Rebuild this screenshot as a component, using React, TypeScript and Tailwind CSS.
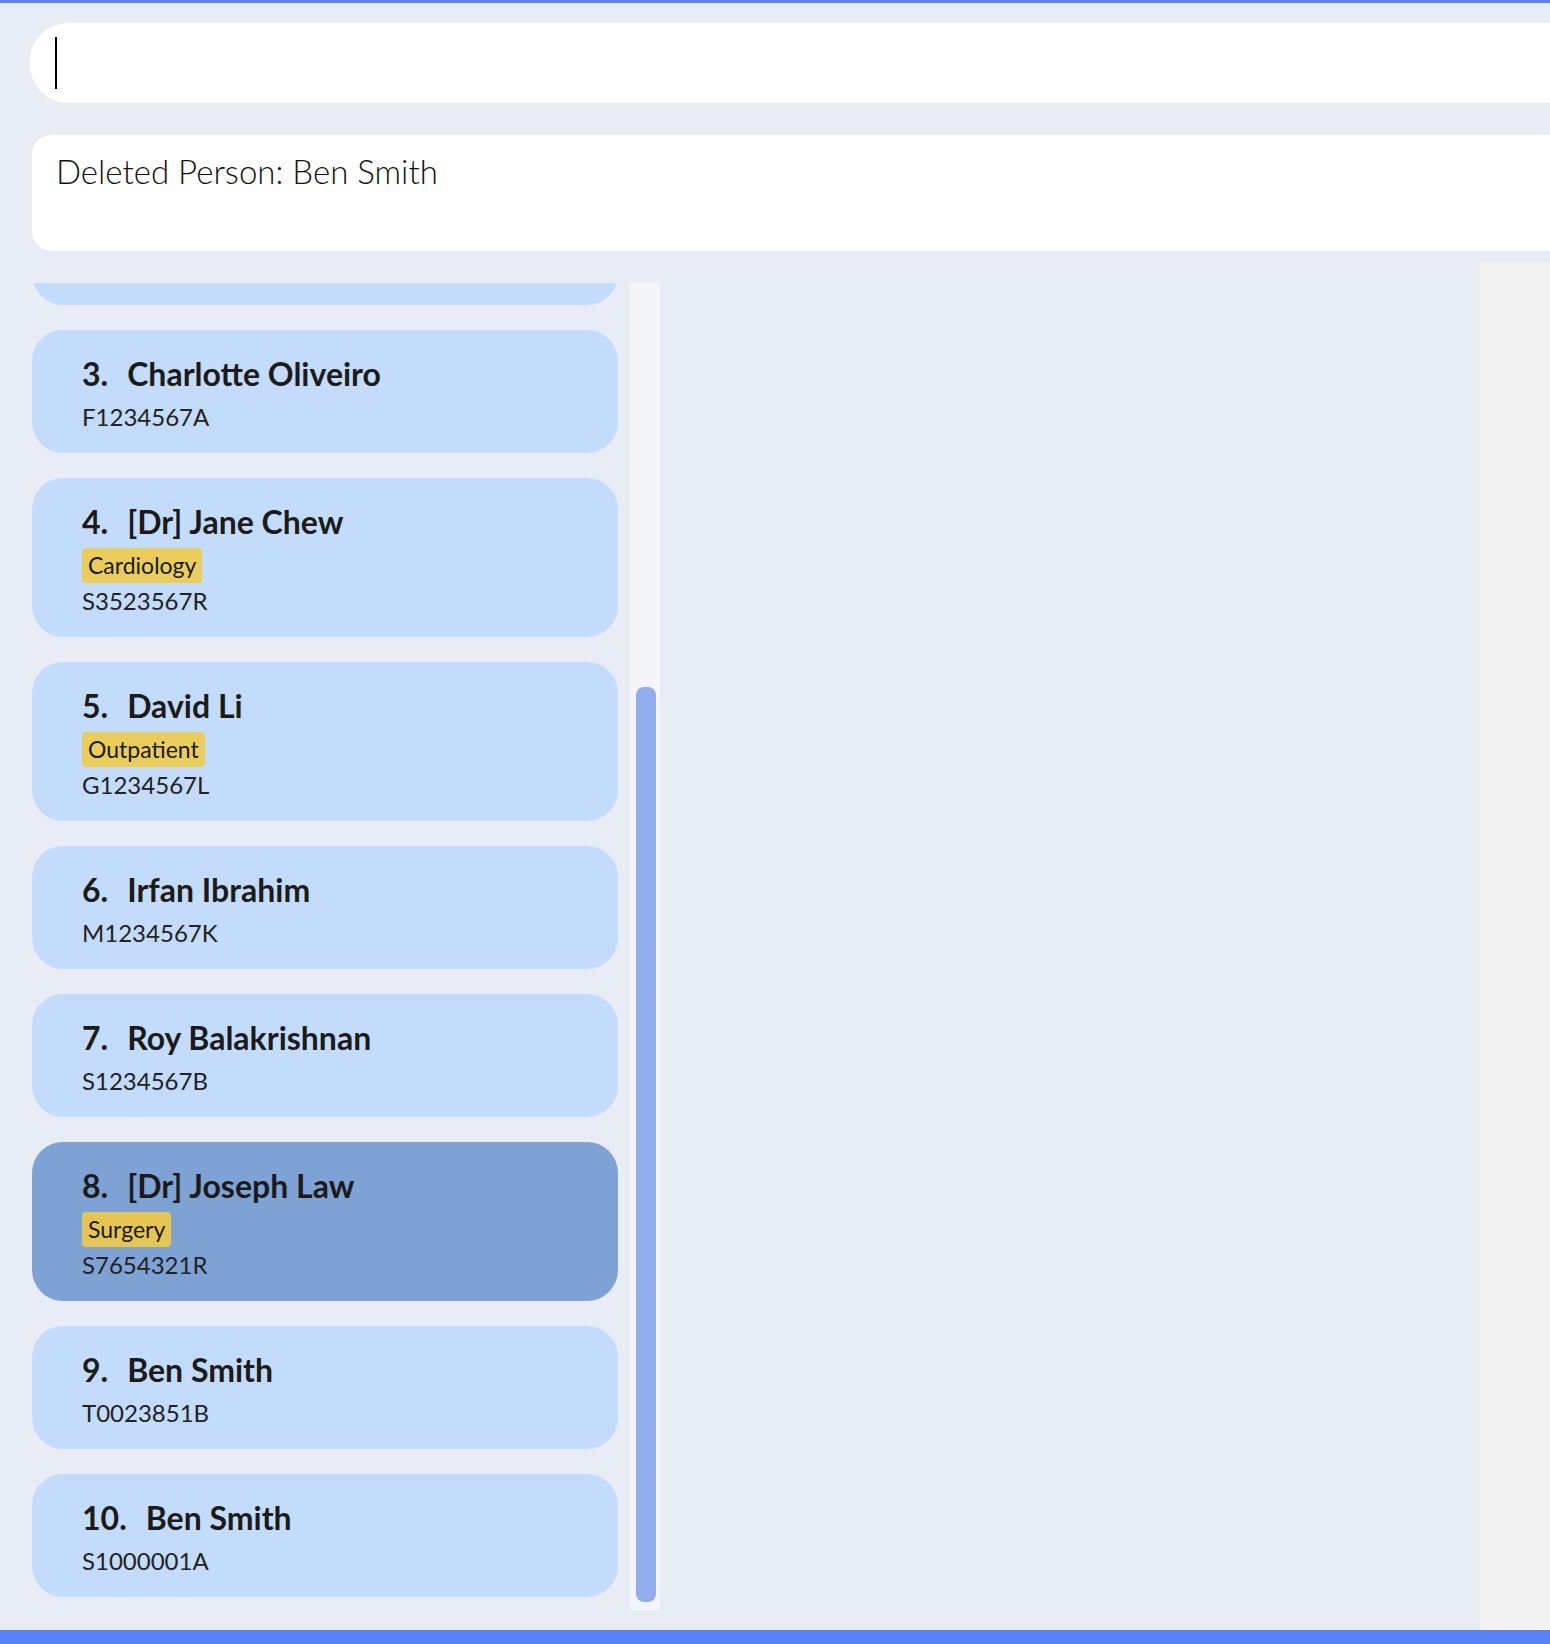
import React from "react";

type Person = { idx: number; name: string; id: string; tag?: string; selected?: boolean; hidden?: boolean };

const people: Person[] = [
  { idx: 2, name: "", id: "", hidden: true },
  { idx: 3, name: "Charlotte Oliveiro", id: "F1234567A" },
  { idx: 4, name: "[Dr] Jane Chew", id: "S3523567R", tag: "Cardiology" },
  { idx: 5, name: "David Li", id: "G1234567L", tag: "Outpatient" },
  { idx: 6, name: "Irfan Ibrahim", id: "M1234567K" },
  { idx: 7, name: "Roy Balakrishnan", id: "S1234567B" },
  { idx: 8, name: "[Dr] Joseph Law", id: "S7654321R", tag: "Surgery", selected: true },
  { idx: 9, name: "Ben Smith", id: "T0023851B" },
  { idx: 10, name: "Ben Smith", id: "S1000001A" },
];

function Card({ p }: { p: Person }) {
  if (p.hidden) {
    return <div className="h-[123px] shrink-0 rounded-[31px] bg-[#c4dcfc]" />;
  }
  return (
    <div
      className={
        "rounded-[31px] pl-[50px] pt-[24px] pb-[21px] text-[#1b1b1b] " +
        (p.selected ? "bg-[#7fa2d5]" : "bg-[#c4dcfc]")
      }
    >
      <div className="flex h-[40px] items-center gap-[19px] text-[32px] leading-[40px] font-bold whitespace-nowrap">
        <span>{p.idx}.</span>
        <span>{p.name}</span>
      </div>
      {p.tag ? (
        <div className="mt-[6px] flex">
          <span
            className={
              "h-[35px] rounded-[4px] px-[6px] text-[23px] leading-[35px] text-[#1b1b1b] " +
              (p.selected ? "bg-[#e6c652]" : "bg-[#ebcd5c]")
            }
          >
            {p.tag}
          </span>
        </div>
      ) : null}
      <div className={(p.tag ? "mt-[3px]" : "mt-[8px]") + " h-[30px] text-[24px] leading-[30px] text-[#222222]"}>
        {p.id}
      </div>
    </div>
  );
}

export default function App() {
  return (
    <div
      className="flex h-[1644px] w-[1550px] flex-col overflow-hidden bg-[#e8ecf5]"
      style={{ fontFamily: "Lato, 'Segoe UI', 'Open Sans', sans-serif" }}
    >
      <div className="h-[3px] shrink-0 bg-[#5a80f6]" />
      <div className="shrink-0 pt-[20px] pl-[30px]">
        <div className="flex h-[80px] items-center rounded-l-[38px] bg-white pl-[25px]">
          <div className="h-[52px] w-[2px] bg-black" />
        </div>
      </div>
      <div className="shrink-0 pt-[32px] pl-[32px]">
        <div className="h-[116px] rounded-l-[20px] bg-white pl-[24px] pt-[16px]">
          <div className="text-[33px] leading-[40px] font-light text-[#111111] whitespace-nowrap">
            Deleted Person: Ben Smith
          </div>
        </div>
      </div>
      <div className="flex min-h-0 flex-1">
        <div className="flex pl-[32px] pt-[32px] pb-[20px]">
          <div className="w-[586px] overflow-hidden">
            <div className="-mt-[101px] flex flex-col gap-[25px]">
              {people.map((p) => (
                <Card key={p.idx} p={p} />
              ))}
            </div>
          </div>
          <div className="ml-[12px] flex w-[30px] flex-col bg-[#f4f5f9] pt-[404px] pb-[8px] pl-[6px] pr-[4px]">
            <div className="flex-1 rounded-[8px] bg-[#93aeee]" />
          </div>
        </div>
        <div className="flex-1" />
        <div className="mt-[12px] w-[70px] bg-[#f3f3f3]" />
      </div>
      <div className="h-[14px] shrink-0 bg-[#5a80f6]" />
    </div>
  );
}
